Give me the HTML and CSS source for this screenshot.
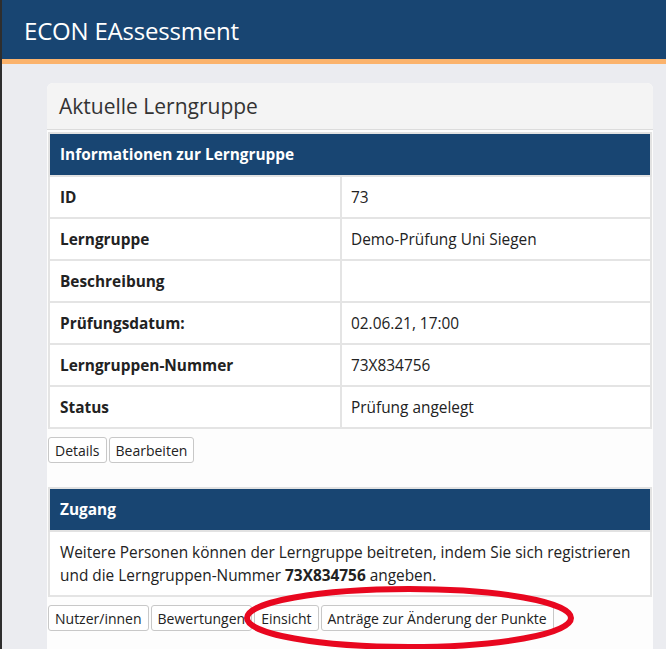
FILE: index.html
```html
<!DOCTYPE html>
<html lang="de">
<head>
<meta charset="utf-8">
<title>ECON EAssessment</title>
<link rel="stylesheet" href="styles.css">
</head>
<body>
<header class="topbar">
  <div class="brand">ECON EAssessment</div>
</header>
<div class="stripe"></div>
<main class="page">
  <section class="card">
    <div class="card-head">Aktuelle Lerngruppe</div>
    <div class="card-body">
      <table class="info">
        <thead>
          <tr><th colspan="2">Informationen zur Lerngruppe</th></tr>
        </thead>
        <tbody>
          <tr><td class="label">ID</td><td>73</td></tr>
          <tr><td class="label">Lerngruppe</td><td>Demo-Prüfung Uni Siegen</td></tr>
          <tr><td class="label">Beschreibung</td><td></td></tr>
          <tr><td class="label">Prüfungsdatum:</td><td>02.06.21, 17:00</td></tr>
          <tr><td class="label">Lerngruppen-Nummer</td><td>73X834756</td></tr>
          <tr><td class="label">Status</td><td>Prüfung angelegt</td></tr>
        </tbody>
      </table>
      <div class="btns">
        <button class="btn">Details</button>
        <button class="btn">Bearbeiten</button>
      </div>

      <table class="info access">
        <thead>
          <tr><th>Zugang</th></tr>
        </thead>
        <tbody>
          <tr><td class="text">Weitere Personen können der Lerngruppe beitreten, indem Sie sich registrieren und die Lerngruppen-Nummer <b>73X834756</b> angeben.</td></tr>
        </tbody>
      </table>
      <div class="btns btns-access">
        <button class="btn">Nutzer/innen</button>
        <button class="btn">Bewertungen</button>
        <button class="btn">Einsicht</button>
        <button class="btn">Anträge zur Änderung der Punkte</button>
        <svg class="mark" width="340" height="72" viewBox="0 0 340 72" aria-hidden="true">
          <ellipse cx="170" cy="35" rx="162" ry="29" fill="none" stroke="#e8071f" stroke-width="6"/>
        </svg>
      </div>
    </div>
  </section>
</main>
</body>
</html>
```

FILE: styles.css
```css
html, body {
  margin: 0;
  padding: 0;
}
body {
  font-family: "Open Sans", "Liberation Sans", sans-serif;
  background: #ebecf0;
  color: #222;
  border-left: 2px solid #2e2e2e;
  min-height: 649px;
  box-sizing: border-box;
  overflow: hidden;
}
.topbar {
  height: 59px;
  background: #184572;
  display: flex;
  align-items: center;
  padding-left: 22px;
}
.brand {
  color: #fff;
  font-size: 24px;
  letter-spacing: -0.2px;
  margin-top: 1px;
}
.stripe {
  height: 5px;
  background: #fbb36c;
}
.page {
  padding: 19px 13px 0 45px;
}
.card {
  background: #fdfdfd;
  border-radius: 6px 6px 0 0;
  min-height: 570px;
}
.card-head {
  background: #f4f4f4;
  border-radius: 6px 6px 0 0;
  border-bottom: 1px solid #dcdcdc;
  height: 47px;
  box-sizing: border-box;
  padding: 9px 0 0 12px;
  font-size: 21px;
  color: #333;
}
.card-body {
  padding: 2px 1px 0 1px;
}
.info {
  width: 604px;
  border-collapse: collapse;
  border: 2px solid #e2e2e2;
  background: #fff;
  font-size: 15.4px;
}
.info th {
  background: #184572;
  color: #fff;
  text-align: left;
  font-weight: 700;
  height: 43px;
  padding: 0 0 0 10px;
  border: 2px solid #e2e2e2;
  box-sizing: border-box;
}
.info td {
  height: 42px;
  padding: 0 0 0 9px;
  border: 2px solid #e4e4e4;
  box-sizing: border-box;
}
.info td.label {
  width: 292px;
  padding-left: 10px;
  font-weight: 700;
}
.access td.text {
  height: auto;
  padding: 9px 10px 8px 10px;
  line-height: 23px;
}
.btns {
  display: flex;
  gap: 2px;
  margin: 8px 0 0 0;
}
.btn {
  font-family: "Open Sans", "Liberation Sans", sans-serif;
  font-size: 14px;
  color: #222;
  background: #fff;
  border: 1px solid #c8c8c8;
  border-radius: 3px;
  height: 26px;
  padding: 0 6px;
  margin: 0;
}
.btns + .access {
  margin-top: 24px;
}
.btns-access {
  position: relative;
}
.mark {
  position: absolute;
  left: 191px;
  top: -22px;
  pointer-events: none;
}
```
